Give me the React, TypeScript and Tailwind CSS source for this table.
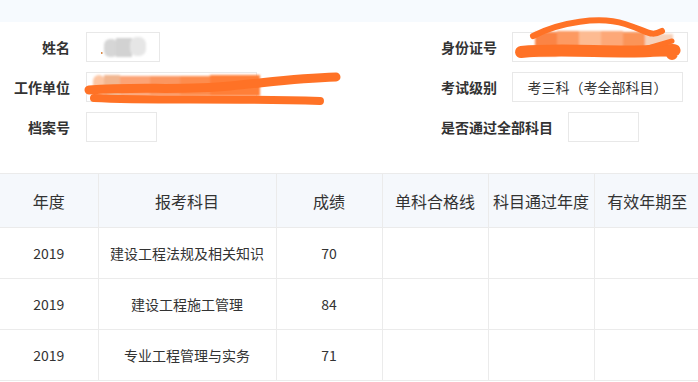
import React from "react";

const font = {
    fontFamily: '"Noto Sans CJK SC", "Noto Sans", "Liberation Sans", sans-serif',
};

const rows = [
    { year: "2019", subject: "建设工程法规及相关知识", score: "70" },
    { year: "2019", subject: "建设工程施工管理", score: "84" },
    { year: "2019", subject: "专业工程管理与实务", score: "71" },
];

const headers = ["年度", "报考科目", "成绩", "单科合格线", "科目通过年度", "有效年期至"];
const widths = [98, 178, 106, 106, 106, 106];

const Field = ({ w, children }: { w: string; children?: React.ReactNode }) => (
    <div
        className={`${w} h-[30px] border border-[#e8e8e8] bg-white flex items-center justify-center text-[14px] text-[#333]`}
    >
        {children}
    </div>
);

// scribbles that hide personal data in the original screenshot
const Redactions = () => (
    <svg
        className="absolute left-0 top-0 pointer-events-none"
        width={698}
        height={170}
        viewBox="0 0 698 170"
    >
        <defs>
            <filter id="soft" x="-20%" y="-40%" width="140%" height="180%">
                <feGaussianBlur stdDeviation="1.2" />
            </filter>
        </defs>
        {/* name */}
        <g filter="url(#soft)">
            <rect x="104" y="39" width="14" height="18" rx="6" fill="#d6d6d6" />
            <rect x="116" y="38" width="16" height="19" fill="#d2d2d2" />
            <rect x="130" y="37" width="16" height="19" rx="7" fill="#e6e6e6" />
        </g>
        <rect x="101" y="52" width="1.5" height="2" fill="#d88a4a" />
        {/* work unit */}
        <g filter="url(#soft)">
            <rect x="93" y="75" width="12" height="21" rx="6" fill="#fcc6a4" />
            <rect x="104" y="75" width="16" height="21" fill="#f1b690" />
            <rect x="120" y="76" width="30" height="20" fill="#fca374" />
            <rect x="150" y="76" width="30" height="20" fill="#fb9660" />
            <rect x="180" y="76" width="30" height="20" fill="#fd8c4e" />
            <rect x="210" y="75" width="50" height="21" fill="#ff7f38" />
        </g>
        <path
            d="M89 90 C 140 86, 180 91, 230 86 S 300 78, 336 77"
            stroke="#ff7226"
            strokeWidth="9"
            strokeLinecap="round"
            fill="none"
        />
        <path
            d="M94 98 C 150 101, 220 98, 320 101"
            stroke="#ff7226"
            strokeWidth="8"
            strokeLinecap="round"
            fill="none"
        />
        {/* id number */}
        <g filter="url(#soft)">
            <rect x="535" y="32" width="22" height="24" fill="#fb8444" />
            <rect x="557" y="31" width="22" height="24" fill="#fd9a62" />
            <rect x="579" y="31" width="22" height="24" fill="#fdbb92" />
            <rect x="601" y="31" width="22" height="24" fill="#fda878" />
            <rect x="623" y="32" width="22" height="24" fill="#fb9458" />
            <rect x="645" y="34" width="28" height="22" fill="#f6d2bc" />
        </g>
        <path
            d="M533 36 C 560 22, 600 16, 625 24 S 650 37, 662 31"
            stroke="#ff7226"
            strokeWidth="6"
            strokeLinecap="round"
            fill="none"
        />
        <path
            d="M521 52 C 560 48, 610 53, 650 51 S 668 50, 672 54"
            stroke="#ff7226"
            strokeWidth="12"
            strokeLinecap="round"
            fill="none"
        />
        <path d="M648 48 L 672 41" stroke="#ff7226" strokeWidth="5" strokeLinecap="round" />
    </svg>
);

const App = () => {
    return (
        <div className="relative w-[698px] h-[382px] overflow-hidden bg-white" style={font}>
            <div className="h-[22px] bg-[#f6fafe]" />

            <div className="flex pt-[10px]">
                <div className="w-[441px] flex flex-col gap-[10px]">
                    <div className="flex items-center">
                        <div className="w-[70px] text-right text-[14px] font-bold text-[#333]">姓名</div>
                        <div className="ml-[16px]">
                            <Field w="w-[74px]" />
                        </div>
                    </div>
                    <div className="flex items-center">
                        <div className="w-[70px] text-right text-[14px] font-bold text-[#333]">工作单位</div>
                        <div className="ml-[16px]">
                            <Field w="w-[171px]" />
                        </div>
                    </div>
                    <div className="flex items-center">
                        <div className="w-[70px] text-right text-[14px] font-bold text-[#333]">档案号</div>
                        <div className="ml-[16px]">
                            <Field w="w-[71px]" />
                        </div>
                    </div>
                </div>
                <div className="flex flex-col gap-[10px]">
                    <div className="flex items-center gap-[15px]">
                        <div className="text-[14px] font-bold text-[#333]">身份证号</div>
                        <Field w="w-[176px]" />
                    </div>
                    <div className="flex items-center gap-[15px]">
                        <div className="text-[14px] font-bold text-[#333]">考试级别</div>
                        <Field w="w-[171px]">
                            考三科<span className="inline-block w-[14px] text-right">（</span>考全部科目
                            <span className="inline-block w-[14px] text-left">）</span>
                        </Field>
                    </div>
                    <div className="flex items-center gap-[15px]">
                        <div className="text-[14px] font-bold text-[#333]">是否通过全部科目</div>
                        <Field w="w-[71px]" />
                    </div>
                </div>
            </div>

            <Redactions />

            <table className="mt-[31px] w-[700px] table-fixed border-collapse text-[#333]">
                <colgroup>
                    {widths.map((w, i) => (
                        <col key={i} style={{ width: w }} />
                    ))}
                </colgroup>
                <thead>
                    <tr className="h-[54px] bg-[#f5f8fc]">
                        {headers.map((h, i) => (
                            <th
                                key={h}
                                className={`border-t border-b border-[#ebebeb] text-[16px] font-normal text-center whitespace-nowrap ${
                                    i > 0 ? "border-l" : ""
                                }`}
                            >
                                {h}
                            </th>
                        ))}
                    </tr>
                </thead>
                <tbody>
                    {rows.map((r, idx) => (
                        <tr key={idx} className="h-[51px]">
                            <td className="border-b border-[#ebebeb] text-center text-[14px]">{r.year}</td>
                            <td className="border-b border-l border-[#ebebeb] text-center text-[14px] whitespace-nowrap">
                                {r.subject}
                            </td>
                            <td className="border-b border-l border-[#ebebeb] text-center text-[14px]">{r.score}</td>
                            <td className="border-b border-l border-[#ebebeb]" />
                            <td className="border-b border-l border-[#ebebeb]" />
                            <td className="border-b border-l border-[#ebebeb]" />
                        </tr>
                    ))}
                </tbody>
            </table>
        </div>
    );
};

export default App;
